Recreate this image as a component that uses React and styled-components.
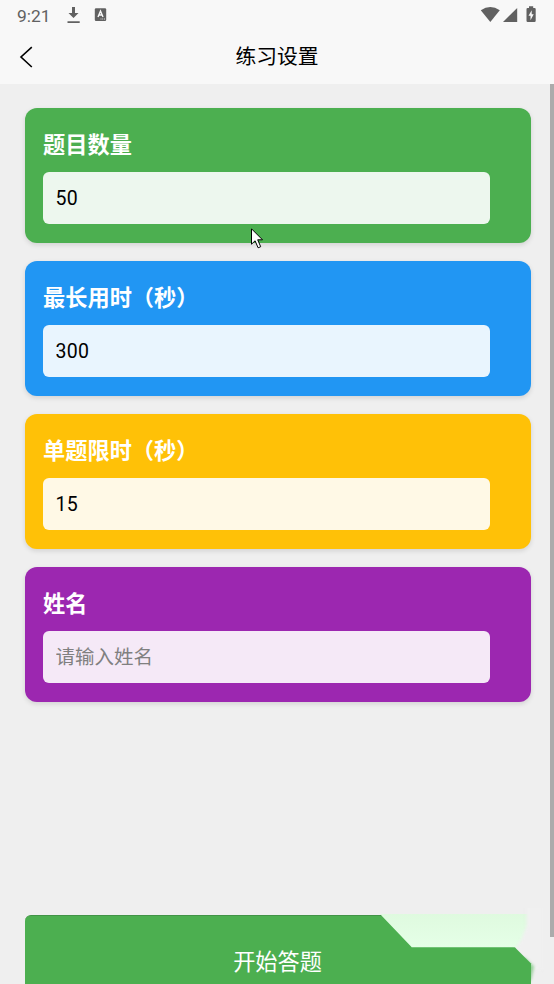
import React, { useState } from "react";
import styled, { createGlobalStyle } from "styled-components";

const GlobalStyle = createGlobalStyle`
  * {
    box-sizing: border-box;
  }
  body {
    margin: 0;
    background: #efefef;
    font-family: Roboto, "Noto Sans CJK SC", sans-serif;
  }
`;

const Page = styled.div`
  position: relative;
  display: flex;
  flex-direction: column;
  width: 100%;
  height: 984px;
  overflow: hidden;
  background: #efefef;
`;

const StatusBar = styled.div`
  display: flex;
  align-items: center;
  flex: none;
  height: 30px;
  padding: 0 17px;
  background: #f8f8f8;
  color: #616161;
`;

const Clock = styled.span`
  width: 49px;
  padding-top: 1px;
  font-size: 17.4px;
  line-height: 30px;
`;

const StatusIcons = styled.svg`
  display: block;
  flex: none;
  margin-left: ${(props) => (props.$end ? "auto" : "0")};
`;

const NavBar = styled.header`
  display: grid;
  grid-template-columns: 60px 1fr 60px;
  align-items: center;
  flex: none;
  height: 54px;
  background: #f8f8f8;
`;

const BackButton = styled.button`
  display: flex;
  padding: 0 0 0 19px;
  border: 0;
  background: none;
`;

const Title = styled.h1`
  margin: 0;
  font-size: 20.8px;
  font-weight: 400;
  line-height: 54px;
  text-align: center;
  color: #000;
`;

const Content = styled.main`
  display: flex;
  flex-direction: column;
  flex: 1;
  gap: 18.5px;
  padding: 24.3px 23.5px 0 24.5px;
`;

const Card = styled.section`
  flex: none;
  height: 134.5px;
  padding: 18.6px;
  border-radius: 12px;
  background: ${(props) => props.$color};
  box-shadow: 0 2px 5px rgba(0, 0, 0, 0.12);
`;

const Label = styled.label`
  display: block;
  height: 45px;
  font-size: 22.2px;
  font-weight: 700;
  line-height: 37px;
  color: #fff;
`;

const Input = styled.input`
  display: block;
  width: 447px;
  height: 52.3px;
  padding: 0 12.5px;
  border: 0;
  border-radius: 6px;
  outline: 0;
  background: rgba(255, 255, 255, 0.9);
  font-family: inherit;
  font-size: 19.5px;
  letter-spacing: 0.2px;
  color: #000;
  &::placeholder {
    letter-spacing: 0;
    color: #808080;
  }
`;

const StartButton = styled.button`
  position: relative;
  flex: none;
  height: 69px;
  margin: 0 23.5px 0 24.5px;
  padding: 24px 0 0;
  border: 0;
  border-top: 1px solid #419346;
  border-radius: 6px 6px 0 0;
  background: #4caf50;
  font-family: inherit;
  font-size: 22.2px;
  line-height: 44px;
  color: #fff;
`;

const Ribbon = styled.svg`
  position: absolute;
  right: 0;
  bottom: 0;
`;

const ScrollThumb = styled.div`
  position: absolute;
  top: 84px;
  right: 0;
  width: 4px;
  height: 853px;
  background: #ababab;
`;

const Pointer = styled.svg`
  position: absolute;
  top: 228px;
  left: 251px;
`;

const fields = [
  { id: "count", label: "题目数量", color: "#4caf50", value: "50" },
  { id: "total", label: "最长用时（秒）", color: "#2196f3", value: "300" },
  { id: "single", label: "单题限时（秒）", color: "#ffc107", value: "15" },
  { id: "name", label: "姓名", color: "#9c27b0", value: "", placeholder: "请输入姓名" },
];

const Field = ({ field }) => {
  const [value, setValue] = useState(field.value);
  return (
    <Card $color={field.color}>
      <Label htmlFor={field.id}>{field.label}</Label>
      <Input
        id={field.id}
        value={value}
        placeholder={field.placeholder}
        onChange={(e) => setValue(e.target.value)}
      />
    </Card>
  );
};

const App = () => {
  return (
    <Page>
      <GlobalStyle />
      <StatusBar>
        <Clock>9:21</Clock>
        <StatusIcons width="42" height="30" fill="#616161">
          <path d="M6 7h3v6h3.5L7.5 18l-5-5H6zM1.5 21.2h12.2v1.8H1.5z" />
          <rect x="28.8" y="8.3" width="11.4" height="12.6" rx="1.2" />
          <path d="M32 17l2.5-6 2.5 6M33 15h3" fill="none" stroke="#f8f8f8" strokeWidth="1.4" />
          <path d="M34.5 19h1M36.2 19h1M38 19h1" stroke="#f8f8f8" strokeWidth="0.8" />
        </StatusIcons>
        <StatusIcons $end width="57" height="30" fill="#616161">
          <path d="M.8 10.200Q10.300 3.600 19.800 10.200L10.300 22z" />
          <path d="M37.200 8v14H23z" />
          <path d="M49 6.200h4.200v1.700h1.300q1.200 0 1.200 1.200v11.700q0 1.200-1.200 1.200h-6.800q-1.200 0-1.200-1.200V9.100q0-1.200 1.200-1.200H49z" />
          <path d="M51.700 10.200v4h2l-3.200 6v-4.500h-2z" fill="#f8f8f8" />
        </StatusIcons>
      </StatusBar>
      <NavBar>
        <BackButton aria-label="返回">
          <svg width="15" height="22" fill="none" stroke="#000" strokeWidth="1.6">
            <path d="M12.800 1.200L2 11l10.800 10" />
          </svg>
        </BackButton>
        <Title>练习设置</Title>
      </NavBar>
      <Content>
        {fields.map((field) => (
          <Field key={field.id} field={field} />
        ))}
      </Content>
      <StartButton>开始答题</StartButton>

      {/* pale folded corner over the start button */}
      <Ribbon width="180" height="76" viewBox="374 908 180 76">
        <defs>
          <linearGradient id="pale" x1="0" y1="0" x2="0" y2="1">
            <stop offset="0" stopColor="#dffadf" />
            <stop offset="0.6" stopColor="#e5ffe7" />
          </linearGradient>
          <filter id="soft" x="-10%" y="-20%" width="120%" height="140%" colorInterpolationFilters="sRGB">
            <feGaussianBlur stdDeviation="0.7" />
          </filter>
          <filter id="edge" x="-50%" y="-20%" width="200%" height="140%" colorInterpolationFilters="sRGB">
            <feGaussianBlur stdDeviation="1.5" />
          </filter>
        </defs>
        <path d="M380 914H534V970L515 947.500H412z" fill="url(#pale)" filter="url(#soft)" />
        <path d="M526.500 904H542V970H535L514 950L521 940L526.500 926z" fill="#f0f0f0" filter="url(#edge)" />
        <path d="M524 957L534 966.500L531 980L524 984z" fill="#4caf50" opacity="0.550" filter="url(#edge)" />
        <path d="M412 947.500H515L531 963.500V990H412z" fill="#4caf50" filter="url(#soft)" />
      </Ribbon>
      <ScrollThumb />
      <Pointer width="14" height="22" viewBox="0 0 14 22">
        <path
          d="M.5.8v15.400l3.600-3.400 3 7 2.600-1.100-3-6.900h4.800z"
          fill="#fff"
          stroke="#000"
        />
      </Pointer>
    </Page>
  );
};

export default App;
